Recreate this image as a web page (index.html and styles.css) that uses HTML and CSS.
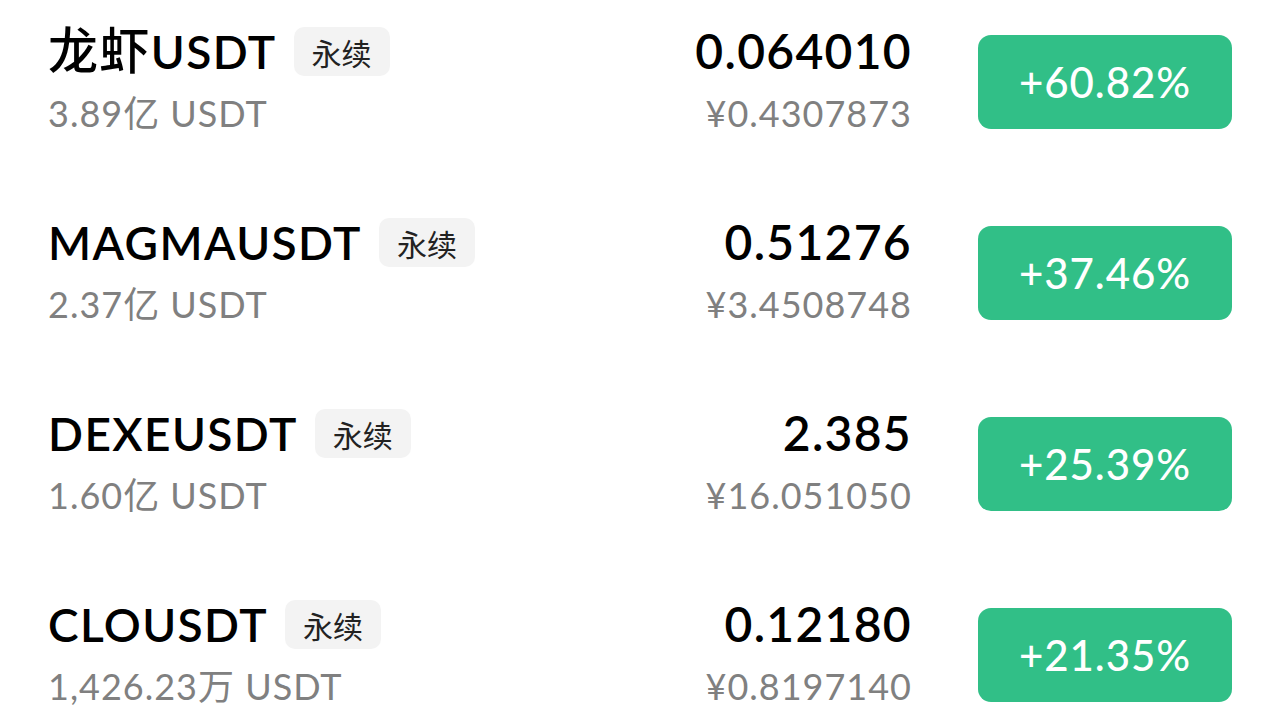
FILE: index.html
```html
<!DOCTYPE html>
<html lang="zh-CN">
<head>
<meta charset="utf-8">
<link rel="stylesheet" href="styles.css">
</head>
<body>
<ul class="list">
  <li class="row">
    <div class="left">
      <div class="title-line"><span class="title"><span class="cjk">龙虾</span>USDT</span><span class="tag">永续</span></div>
      <div class="sub">3.89亿 USDT</div>
    </div>
    <div class="price">
      <div class="last">0.064010</div>
      <div class="cny">¥0.4307873</div>
    </div>
    <div class="chg">+60.82%</div>
  </li>
  <li class="row">
    <div class="left">
      <div class="title-line"><span class="title">MAGMAUSDT</span><span class="tag">永续</span></div>
      <div class="sub">2.37亿 USDT</div>
    </div>
    <div class="price">
      <div class="last">0.51276</div>
      <div class="cny">¥3.4508748</div>
    </div>
    <div class="chg">+37.46%</div>
  </li>
  <li class="row">
    <div class="left">
      <div class="title-line"><span class="title">DEXEUSDT</span><span class="tag">永续</span></div>
      <div class="sub">1.60亿 USDT</div>
    </div>
    <div class="price">
      <div class="last">2.385</div>
      <div class="cny">¥16.051050</div>
    </div>
    <div class="chg">+25.39%</div>
  </li>
  <li class="row">
    <div class="left">
      <div class="title-line"><span class="title">CLOUSDT</span><span class="tag">永续</span></div>
      <div class="sub">1,426.23万 USDT</div>
    </div>
    <div class="price">
      <div class="last">0.12180</div>
      <div class="cny">¥0.8197140</div>
    </div>
    <div class="chg">+21.35%</div>
  </li>
</ul>
</body>
</html>
```

FILE: styles.css
```css
html, body {
  margin: 0;
  padding: 0;
  background: #ffffff;
  height: 720px;
  overflow: hidden;
}
body {
  font-family: "Lato", "Noto Sans CJK SC", sans-serif;
  color: #000;
}
.list {
  list-style: none;
  margin: 0;
  padding: 0 48px;
  height: 720px;
  overflow: hidden;
}
.row {
  display: flex;
  align-items: flex-start;
  height: 191px;
  padding-top: 27px;
  box-sizing: border-box;
}
.left {
  flex: 1;
  display: flex;
  flex-direction: column;
}
.title-line {
  display: flex;
  align-items: center;
  height: 49px;
  gap: 17px;
}
.title {
  font-size: 46px;
  line-height: 49px;
  font-weight: 600;
  letter-spacing: 1.4px;
}
.cjk {
  font-size: 50px;
  font-weight: 500;
  line-height: 0.8;
}
.tag {
  display: inline-flex;
  align-items: center;
  justify-content: center;
  height: 49px;
  padding: 0 18px;
  background: #f3f3f3;
  border-radius: 10px;
  font-size: 30px;
  color: #222;
}
.sub {
  margin-top: 17px;
  font-size: 36px;
  line-height: 40px;
  letter-spacing: 1px;
  color: #808080;
}
.price {
  display: flex;
  flex-direction: column;
  align-items: flex-end;
  margin-right: 67px;
}
.last {
  font-size: 48px;
  font-weight: 600;
  line-height: 46px;
  letter-spacing: 1.3px;
  margin-right: -1px;
  margin-top: 1px;
}
.cny {
  margin-top: 19px;
  font-size: 36px;
  line-height: 40px;
  letter-spacing: 1px;
  margin-right: -1px;
  color: #808080;
}
.chg {
  margin-top: 8px;
  width: 254px;
  height: 94px;
  border-radius: 13px;
  background: #31bf87;
  color: #fff;
  font-size: 42px;
  font-weight: 500;
  letter-spacing: 0.9px;
  display: flex;
  align-items: center;
  justify-content: center;
}
```
